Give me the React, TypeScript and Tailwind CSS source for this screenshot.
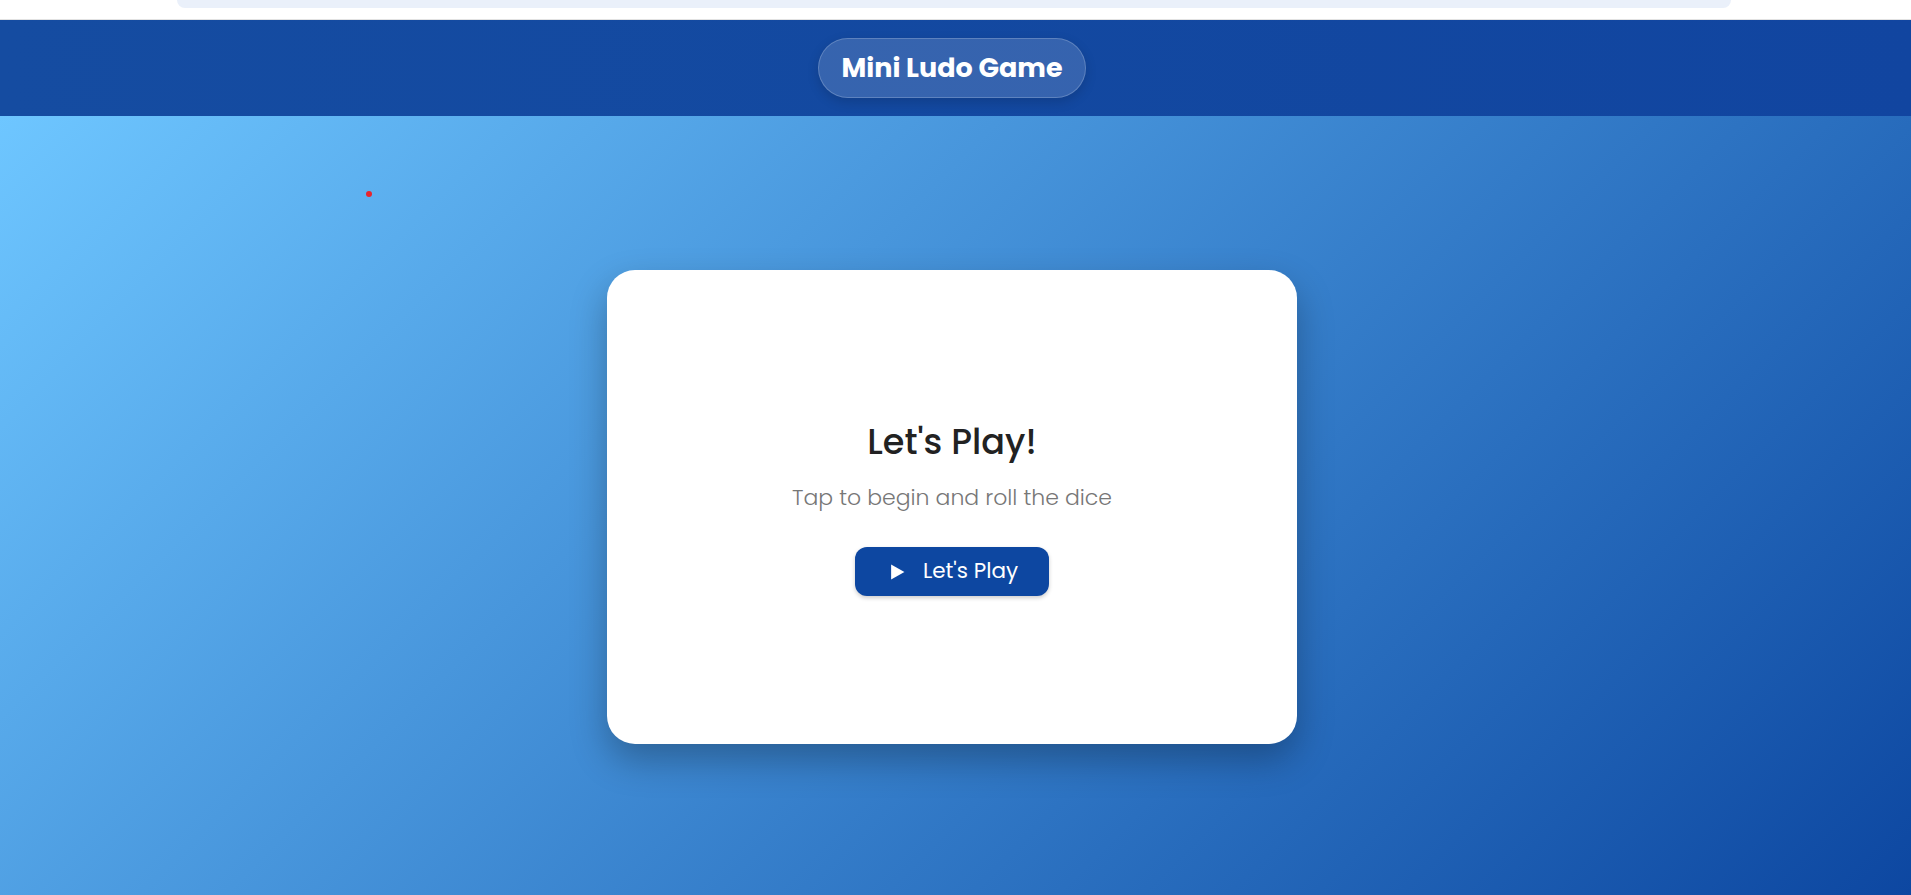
export default function App() {
  return (
    <div className="relative flex h-screen min-h-[895px] flex-col bg-white font-['Poppins','Open_Sans',sans-serif]">
      {/* top strip */}
      <div className="h-[20px] border-b border-[#e2e2e2] bg-white">
        <div className="ml-[177px] mr-[180px] h-[8px] rounded-b-[22px] bg-[#eaf0fa]" />
      </div>

      {/* header */}
      <header className="flex h-[96px] items-center justify-center bg-linear-to-r from-[#154ca1] to-[#1145a0] pr-[7px]">
        <h1 className="flex h-[60px] items-center rounded-full border border-white/20 bg-white/15 px-[22px] text-[27px] font-bold text-white shadow-[0_4px_12px_rgba(0,0,0,0.15)]">
          Mini Ludo Game
        </h1>
      </header>

      {/* main */}
      <main className="relative flex flex-1 items-center justify-center bg-linear-135 from-[#6ec6ff] to-[#0d47a1] pt-[2px] pr-[7px]">
        <span className="absolute left-[366px] top-[75px] h-[6px] w-[6px] rounded-full bg-[#e8242c]" />

        <div className="flex h-[474px] w-[690px] flex-col items-center justify-center rounded-[28px] bg-white pt-[3px] shadow-[0_16px_36px_rgba(0,0,0,0.28)]">
          <h2 className="text-[35px] leading-[44px] font-medium text-[#222]">Let's Play!</h2>
          <p className="mt-[20px] text-[22px] leading-[28px] font-light text-[#777]">Tap to begin and roll the dice</p>
          <button className="mt-[35px] flex h-[49px] w-[194px] items-center justify-center gap-[18px] rounded-[12px] bg-[#0d47a1] text-[21.5px] text-white shadow-[0_2px_4px_rgba(0,0,0,0.2)]">
            <svg viewBox="0 0 14 15" className="ml-[4px] h-[16px] w-[15px]" fill="white">
              <path d="M1 0.5 L13.5 7.5 L1 14.5 Z" />
            </svg>
            <span>Let's Play</span>
          </button>
        </div>
      </main>
    </div>
  );
}
